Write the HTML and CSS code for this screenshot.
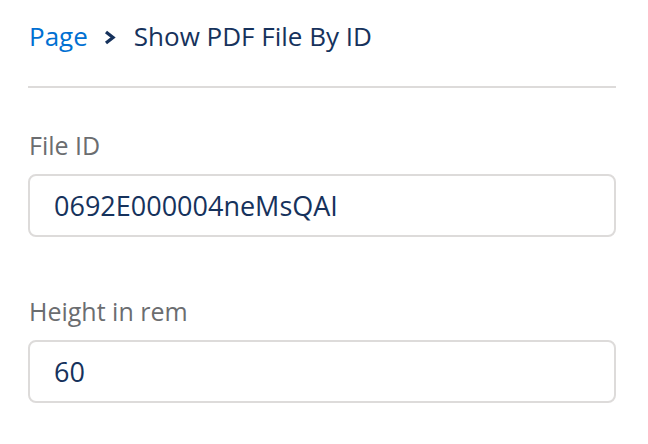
FILE: index.html
```html
<!DOCTYPE html>
<html lang="en">
<head>
<meta charset="utf-8">
<title>Show PDF File By ID</title>
<link rel="stylesheet" href="styles.css">
</head>
<body>
<div class="page">
  <nav class="breadcrumb">
    <a class="crumb-link" href="#">Page</a>
    <svg class="crumb-sep" width="12" height="15" viewBox="0 0 12 15" aria-hidden="true">
      <path d="M2 2 L9 7.5 L2 13" fill="none" stroke="#16325c" stroke-width="3.3" stroke-linejoin="miter" stroke-linecap="butt"/>
    </svg>
    <span class="crumb-current">Show PDF File By ID</span>
  </nav>
  <hr class="divider">
  <div class="field">
    <label class="field-label">File ID</label>
    <div class="field-input">0692E000004neMsQAI</div>
  </div>
  <div class="field">
    <label class="field-label">Height in rem</label>
    <div class="field-input">60</div>
  </div>
</div>
</body>
</html>
```
FILE: styles.css
```css
html, body {
  margin: 0;
  padding: 0;
  background: #ffffff;
}
body {
  font-family: "Open Sans", "Liberation Sans", sans-serif;
}
.page {
  padding: 16px 32px 0 28px;
  display: flex;
  flex-direction: column;
}
.breadcrumb {
  display: flex;
  align-items: center;
  font-size: 26px;
  line-height: 40px;
  color: #16325c;
}
.crumb-link {
  color: #0070d2;
  text-decoration: none;
  margin-left: 1px;
}
.crumb-sep {
  margin: 3px 18px 0 16px;
}
.divider {
  border: none;
  height: 2px;
  background: #dddbda;
  margin: 30px 0 0 0;
}
.field {
  display: flex;
  flex-direction: column;
  gap: 11px;
  margin-top: 39px;
}
.field + .field {
  margin-top: 56px;
}
.field-label {
  font-size: 25px;
  line-height: 36px;
  color: #6b6d70;
  margin-left: 1px;
}
.field-input {
  border: 2px solid #dddbda;
  border-radius: 8px;
  height: 59px;
  padding: 0 24px;
  display: flex;
  align-items: center;
  font-size: 27px;
  color: #16325c;
}
```
